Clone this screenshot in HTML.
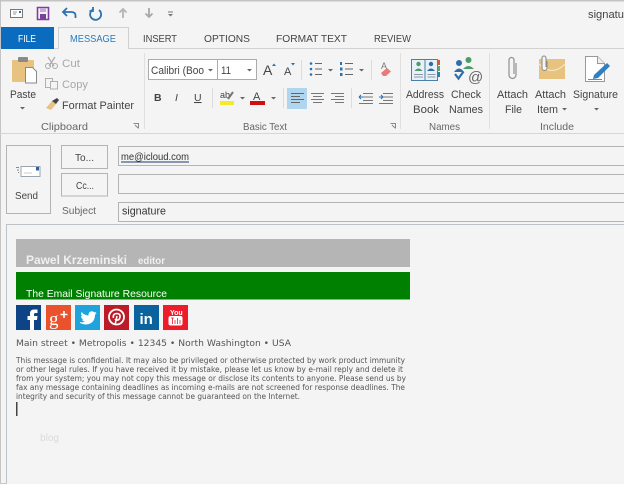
<!DOCTYPE html>
<html><head><meta charset="utf-8"><style>
html,body{margin:0;padding:0;background:#f4f4f4;width:624px;height:484px;overflow:hidden}
svg{display:block;position:absolute;left:0;top:0;filter:blur(.3px)}
text{font-family:"Liberation Sans",sans-serif;font-size:11px;fill:#444}
.g{fill:#666}
.l{fill:#a8a8a8}
.v{font-family:"DejaVu Sans",sans-serif;font-size:7.6px;fill:#555}
</style></head><body>
<svg width="624" height="484" viewBox="0 0 624 484" xmlns="http://www.w3.org/2000/svg">
<rect width="624" height="484" fill="#f4f4f4"/>
<rect x="0" y="0" width="624" height="1.5" fill="#c4c4c4"/>
<rect x="0" y="0" width="1" height="484" fill="#c4c4c4"/>
<rect x="0" y="483" width="624" height="1" fill="#c8c8c8"/>

<!-- QAT -->
<rect x="10.500" y="9.500" width="12" height="8" fill="#fff" stroke="#777"/><path d="M13 12h4M13 14h3" stroke="#999"/><rect x="19" y="11" width="2" height="2" fill="#3a6ea8"/>
<path d="M37.500 7.500h11v12h-11z" fill="none" stroke="#7b3f9e" stroke-width="1.600"/><rect x="40" y="8" width="6" height="4" fill="#c9a8dc"/><rect x="40" y="14" width="6" height="5" fill="#7b3f9e"/>
<path d="M67 8l-4 4 4 4M63 12h8q4.500 0 4.500 3.500V18" fill="none" stroke="#2a72b0" stroke-width="1.800"/>
<path d="M99 10a5.500 5.500 0 1 1-6-.5M93 7v4h-3.500" fill="none" stroke="#2a72b0" stroke-width="1.800"/>
<path d="M123 18V9M119.500 12.500L123 9l3.500 3.500" fill="none" stroke="#b4b4b4" stroke-width="1.800"/>
<path d="M149 8v9M145.500 13.500L149 17l3.500-3.500" fill="none" stroke="#a8a8a8" stroke-width="1.800"/>
<path d="M168 14h5l-2.500 2.500z" fill="#777"/><rect x="168" y="11.500" width="5" height="1" fill="#777"/>
<text x="588" y="18" textLength="36" lengthAdjust="spacingAndGlyphs">signatu</text>

<!-- Tabs -->
<rect x="0" y="48" width="624" height="1" fill="#d2d2d2"/>
<rect x="1" y="27" width="53" height="22" fill="#0b6cbf"/>
<text x="18" y="42" textLength="18" lengthAdjust="spacingAndGlyphs" style="fill:#fff;font-size:10.500px">FILE</text>
<path d="M58.500 49V27.500H128.500V49" fill="#f4f4f4" stroke="#d0d0d0"/>
<rect x="59" y="47" width="69" height="3" fill="#f4f4f4"/>
<text x="70" y="42" textLength="46" lengthAdjust="spacingAndGlyphs" style="fill:#2b7cbd;font-size:10.500px">MESSAGE</text>
<text x="143" y="42" textLength="34" lengthAdjust="spacingAndGlyphs" style="font-size:10.500px">INSERT</text>
<text x="204" y="42" textLength="46" lengthAdjust="spacingAndGlyphs" style="font-size:10.500px">OPTIONS</text>
<text x="276" y="42" textLength="71" lengthAdjust="spacingAndGlyphs" style="font-size:10.500px">FORMAT TEXT</text>
<text x="374" y="42" textLength="37" lengthAdjust="spacingAndGlyphs" style="font-size:10.500px">REVIEW</text>

<!-- Ribbon -->
<rect x="0" y="133" width="624" height="1" fill="#d6d6d6"/>
<rect x="144" y="53" width="1" height="76" fill="#e0e0e0"/>
<rect x="400" y="53" width="1" height="76" fill="#e0e0e0"/>
<rect x="489" y="53" width="1" height="76" fill="#e0e0e0"/>

<!-- Clipboard -->
<rect x="12" y="60" width="22" height="22" fill="#e8c27f" rx="1"/>
<rect x="18" y="57" width="10" height="5" fill="#8a8a8a" rx="1"/>
<path d="M25.500 67.500h7l4 4v11.500h-11z" fill="#fff" stroke="#8a8a8a"/>
<text x="10" y="98" textLength="26" lengthAdjust="spacingAndGlyphs">Paste</text>
<path d="M20 107h5l-2.500 2.500z" fill="#666"/>
<path d="M48 57l6 9M55 57l-6 9" stroke="#aaa" stroke-width="1.200"/><circle cx="48" cy="66" r="2.500" fill="none" stroke="#aaa"/><circle cx="55" cy="66" r="2.500" fill="none" stroke="#aaa"/>
<text x="62" y="67" textLength="18" lengthAdjust="spacingAndGlyphs" class="l">Cut</text>
<rect x="45.500" y="78.500" width="7" height="9" fill="#f4f4f4" stroke="#b0b0b0"/><rect x="50.500" y="81.500" width="7" height="7.500" fill="#f4f4f4" stroke="#b0b0b0"/>
<text x="62" y="88" textLength="26" lengthAdjust="spacingAndGlyphs" class="l">Copy</text>
<path d="M46 108l6-7 4 3-5 6z" fill="#e8c27f"/><path d="M52 101l5-3 2 2-3 4z" fill="#444"/>
<text x="62" y="109" textLength="72" lengthAdjust="spacingAndGlyphs">Format Painter</text>
<text x="41" y="130" textLength="47" lengthAdjust="spacingAndGlyphs" class="g" style="font-size:10.500px">Clipboard</text>
<path d="M133.500 123.500h5v5M135 125l3 3" fill="none" stroke="#888"/>

<!-- Basic text -->
<rect x="148.500" y="59.500" width="69" height="20" fill="#fff" stroke="#ababab"/>
<rect x="217.500" y="59.500" width="39" height="20" fill="#fff" stroke="#ababab"/>
<text x="151" y="74" textLength="53" lengthAdjust="spacingAndGlyphs">Calibri (Boo</text>
<path d="M208 69h5l-2.500 2.500z" fill="#666"/>
<text x="221" y="74" textLength="10" lengthAdjust="spacingAndGlyphs">11</text>
<path d="M247 69h5l-2.500 2.500z" fill="#666"/>
<text x="263" y="75" style="font-size:14px">A</text><path d="M272 66l2-2.500 2 2.500z" fill="#2a72b0"/>
<text x="284" y="75" style="font-size:11px">A</text><path d="M291 63h4l-2 2.500z" fill="#2a72b0"/>
<rect x="301" y="60" width="1" height="20" fill="#dcdcdc"/>
<g fill="#2a72b0"><circle cx="311" cy="63.500" r="1.300"/><circle cx="311" cy="69" r="1.300"/><circle cx="311" cy="74.500" r="1.300"/></g>
<path d="M315 63.500h7M315 69h7M315 74.500h7" stroke="#666"/>
<path d="M328 69h5l-2.500 2.500z" fill="#666"/>
<g fill="#2a72b0"><rect x="340" y="62" width="2" height="3"/><rect x="340" y="67.500" width="2.500" height="3"/><rect x="340" y="73" width="2.500" height="3"/></g>
<path d="M345 63.500h8M345 69h8M345 74.500h8" stroke="#666"/>
<path d="M359 69h5l-2.500 2.500z" fill="#666"/>
<rect x="371" y="60" width="1" height="20" fill="#dcdcdc"/>
<text x="381" y="69" style="font-size:9px;fill:#777">A</text>
<path d="M381 73l6-5 4 3.500-5 4.500h-3z" fill="#e87a7a"/>
<text x="154" y="101" style="font-weight:bold;font-size:10.500px">B</text>
<text x="175" y="101" style="font-style:italic;font-size:10.500px">I</text>
<text x="194" y="101" style="font-size:10.500px;text-decoration:underline">U</text>
<rect x="212" y="88" width="1" height="20" fill="#dcdcdc"/>
<rect x="220" y="101" width="14" height="4" fill="#f4ea2a"/>
<text x="220" y="98" style="font-size:9px">ab</text><path d="M228 99l5-7" stroke="#777" stroke-width="2"/>
<path d="M240 97h5l-2.500 2.500z" fill="#666"/>
<rect x="250" y="101" width="15" height="4" fill="#d01010"/>
<text x="253" y="100" style="font-size:11px">A</text>
<path d="M271 97h5l-2.500 2.500z" fill="#666"/>
<rect x="283" y="88" width="1" height="20" fill="#dcdcdc"/>
<rect x="287" y="88" width="20" height="21" fill="#b0d5ee"/>
<path d="M291 93.500h13M291 96.500h9M291 99.500h13M291 102.500h9" stroke="#666"/>
<path d="M311 93.500h13M313 96.500h9M311 99.500h13M313 102.500h9" stroke="#777"/>
<path d="M331 93.500h13M335 96.500h9M331 99.500h13M335 102.500h9" stroke="#777"/>
<rect x="351" y="88" width="1" height="20" fill="#dcdcdc"/>
<path d="M363 93.500h10M363 97h10M363 100.500h10M359 103.500h14" stroke="#777"/><path d="M359 97h4M359 97l2-2M359 97l2 2" stroke="#2a72b0" fill="none"/>
<path d="M383 93.500h10M383 97h10M383 100.500h10M379 103.500h14" stroke="#777"/><path d="M379 97h4M383 97l-2-2M383 97l-2 2" stroke="#2a72b0" fill="none"/>
<text x="243" y="130" textLength="44" lengthAdjust="spacingAndGlyphs" class="g" style="font-size:10.500px">Basic Text</text>
<path d="M390.500 123.500h5v5M392 125l3 3" fill="none" stroke="#888"/>

<!-- Names -->
<path d="M411.500 59.500h13.500v21h-13.500z" fill="#e8f1f7" stroke="#4a7fa8"/><path d="M425 59.500h12.500v21H425z" fill="#e8f1f7" stroke="#4a7fa8"/>
<rect x="437.500" y="60" width="2.500" height="5" fill="#d05a3a"/><rect x="437.500" y="66" width="2.500" height="5" fill="#5aa86a"/><rect x="437.500" y="72" width="2.500" height="5" fill="#3a7ab0"/>
<circle cx="418.500" cy="64" r="2.200" fill="#4f9a6a"/><path d="M414.500 71q4-5 8 0z" fill="#4f9a6a"/>
<circle cx="431" cy="64" r="2.200" fill="#2f6ea8"/><path d="M427 71q4-5 8 0z" fill="#2f6ea8"/>
<path d="M414 74.500h9M414 77h9M427.500 74.500h8M427.500 77h8" stroke="#8a9aa8"/>
<circle cx="468.500" cy="60" r="3" fill="#4f9a6a"/><path d="M463 69q5.500-6 11 0z" fill="#4f9a6a"/>
<circle cx="459" cy="63" r="3" fill="#2f6ea8"/><path d="M454 72q5-7 10 0z" fill="#2f6ea8"/>
<path d="M455 74l3.500 4.500 5-7" fill="none" stroke="#2f6ea8" stroke-width="2.200"/>
<text x="468" y="82" style="font-size:15px;fill:#666">@</text>
<text x="406" y="98" textLength="38" lengthAdjust="spacingAndGlyphs">Address</text>
<text x="413" y="113" textLength="26" lengthAdjust="spacingAndGlyphs">Book</text>
<text x="451" y="98" textLength="30" lengthAdjust="spacingAndGlyphs">Check</text>
<text x="449" y="113" textLength="34" lengthAdjust="spacingAndGlyphs">Names</text>
<text x="429" y="130" textLength="31" lengthAdjust="spacingAndGlyphs" class="g" style="font-size:10.500px">Names</text>

<!-- Include -->
<path d="M516 63v12a3.500 3.500 0 0 1-7 0V60a2.500 2.500 0 0 1 5 0v14" fill="none" stroke="#909090" stroke-width="1.200"/>
<text x="497" y="98" textLength="31" lengthAdjust="spacingAndGlyphs">Attach</text>
<text x="505" y="113" textLength="17" lengthAdjust="spacingAndGlyphs">File</text>
<rect x="539" y="59" width="26" height="20" fill="#e8c27f"/>
<path d="M539 64q13 13 26 0" fill="none" stroke="#f6e6c6" stroke-width="1.200"/>
<path d="M547 61v7a2.500 2.500 0 0 1-5 0v-10a2 2 0 0 1 4 0v9" fill="#f4f4f4" stroke="#888"/>
<text x="535" y="98" textLength="31" lengthAdjust="spacingAndGlyphs">Attach</text>
<text x="537" y="113" textLength="21" lengthAdjust="spacingAndGlyphs">Item</text>
<path d="M562 108h5l-2.500 2.500z" fill="#666"/>
<path d="M585.500 56.500h12l7 7v18h-19z" fill="#fff" stroke="#999"/><path d="M597.500 56.500v7h7" fill="#eee" stroke="#999"/>
<path d="M594 75l13-12 3 3-12 12-5 1z" fill="#2f7fc4"/>
<path d="M588 79.500h14" stroke="#5a90b8"/>
<text x="573" y="98" textLength="45" lengthAdjust="spacingAndGlyphs">Signature</text>
<path d="M594 108h5l-2.500 2.500z" fill="#666"/>
<text x="540" y="130" textLength="34" lengthAdjust="spacingAndGlyphs" class="g" style="font-size:10.500px">Include</text>

<!-- Compose -->
<rect x="6.500" y="145.500" width="44" height="68" fill="#f4f4f4" stroke="#b4b4b4"/>
<rect x="21" y="166.500" width="19" height="10" fill="#fff" stroke="#9aa4ac"/><rect x="36" y="167" width="3" height="3.500" fill="#2a62a8"/><path d="M24 173h8" stroke="#ccc"/>
<path d="M16 167.500h3M17 170h2M18 172.500h1" stroke="#888"/>
<text x="15" y="199" textLength="23" lengthAdjust="spacingAndGlyphs" style="font-size:10.500px">Send</text>
<rect x="61.500" y="145.500" width="46" height="23" fill="#f4f4f4" stroke="#b4b4b4"/>
<text x="75" y="161" textLength="19" lengthAdjust="spacingAndGlyphs" style="font-size:10.500px">To...</text>
<rect x="61.500" y="173.500" width="46" height="22.500" fill="#f4f4f4" stroke="#b4b4b4"/>
<text x="76" y="189" textLength="18" lengthAdjust="spacingAndGlyphs" style="font-size:10.500px">Cc...</text>
<text x="62" y="214" textLength="34" lengthAdjust="spacingAndGlyphs" class="g" style="font-size:10.500px">Subject</text>
<rect x="118.500" y="146.500" width="510" height="19" fill="#f4f4f4" stroke="#b4b4b4"/>
<rect x="118.500" y="174.500" width="510" height="19" fill="#f4f4f4" stroke="#b4b4b4"/>
<rect x="118.500" y="202.500" width="510" height="19" fill="#f4f4f4" stroke="#b4b4b4"/>
<text x="121" y="160" textLength="68" lengthAdjust="spacingAndGlyphs" style="font-size:10.500px;fill:#333">me@icloud.com</text>
<rect x="121" y="161.500" width="68" height="1" fill="#1a3a6a"/>
<text x="122" y="214.500" textLength="44" lengthAdjust="spacingAndGlyphs" style="font-size:11px;fill:#333">signature</text>

<!-- Body -->
<rect x="6.500" y="224.500" width="630" height="270" fill="#f4f4f4" stroke="#bcc2c8"/>
<rect x="16" y="239" width="394" height="28" fill="#b5b5b5"/>
<text x="26" y="264" textLength="101" lengthAdjust="spacingAndGlyphs" style="font-weight:bold;font-size:12px;fill:#f0f0f0">Pawel Krzeminski</text>
<text x="138" y="264" textLength="27" lengthAdjust="spacingAndGlyphs" style="font-weight:bold;font-size:10px;fill:#f0f0f0">editor</text>
<rect x="16" y="272" width="394" height="27.500" fill="#008000"/>
<text x="26" y="297" textLength="141" lengthAdjust="spacingAndGlyphs" style="font-size:10.500px;fill:#fff">The Email Signature Resource</text>

<!-- Social -->
<rect x="16" y="305" width="25" height="25" fill="#0c4485"/>
<path d="M30 330v-10h-2.500v-4H30v-2.500q0-4 4-4h3.500v3.500h-2q-1.500 0-1.500 1.500V316h3.500l-.5 4h-3v10z" fill="#fff"/>
<rect x="46" y="305" width="25" height="25" fill="#e9522c"/>
<text x="49" y="325" style="font-family:'Liberation Serif',serif;font-size:19px;fill:#fff">g</text>
<path d="M60.500 314.500h7M64 311v7" stroke="#fff" stroke-width="1.600"/>
<rect x="75" y="305" width="25" height="25" fill="#1ea3dc"/>
<path d="M80 322q3 1 5-.5-2.500 0-3-2 1 .2 1.500 0-2.500-1-2.500-3.500.8.4 1.500.4-2.300-2-1-4.400 3 3.300 7 3.500-.3-3.800 3-4.300 1.800 0 2.800 1.200 1.200-.2 2-.8-.4 1.300-1.500 2 1 0 2-.5-.8 1.100-1.800 1.800 0 6-4.500 8.500-5 2.500-10.500-.4z" fill="#fff"/>
<rect x="104" y="305" width="25" height="25" fill="#bb1c27"/>
<circle cx="116.500" cy="317" r="7.500" fill="none" stroke="#fff" stroke-width="1.800"/>
<path d="M115 325l2-9M113.500 318q-1-4 3-4.500 4 0 3.500 3.500-.5 3.500-3.500 3-1 0-1.300-1" fill="none" stroke="#fff" stroke-width="1.600"/>
<rect x="134" y="305" width="25" height="25" fill="#0b639d"/>
<text x="139.500" y="324" style="font-weight:bold;font-size:15px;fill:#fff">in</text>
<rect x="163" y="305" width="25" height="25" fill="#ec1c2b"/>
<text x="170" y="315" style="font-weight:bold;font-size:7px;fill:#fff">You</text>
<rect x="168.500" y="316" width="14" height="9.500" rx="2" fill="#fff"/>
<path d="M171 318h3M172.500 318v6M175 320v4M177.500 318v6M180 320v4" stroke="#ec1c2b" stroke-width=".8"/>

<text x="16" y="346" textLength="275" lengthAdjust="spacingAndGlyphs" style="font-family:'DejaVu Sans',sans-serif;font-size:9px;fill:#555">Main street • Metropolis • 12345 • North Washington • USA</text>

<text class="v" x="16" y="363" textLength="389" lengthAdjust="spacingAndGlyphs">This message is confidential. It may also be privileged or otherwise protected by work product immunity</text>
<text class="v" x="16" y="372" textLength="387" lengthAdjust="spacingAndGlyphs">or other legal rules. If you have received it by mistake, please let us know by e-mail reply and delete it</text>
<text class="v" x="16" y="381" textLength="390" lengthAdjust="spacingAndGlyphs">from your system; you may not copy this message or disclose its contents to anyone. Please send us by</text>
<text class="v" x="16" y="390" textLength="389" lengthAdjust="spacingAndGlyphs">fax any message containing deadlines as incoming e-mails are not screened for response deadlines. The</text>
<text class="v" x="16" y="399" textLength="284" lengthAdjust="spacingAndGlyphs">integrity and security of this message cannot be guaranteed on the Internet.</text>
<rect x="16" y="402" width="1.500" height="14" fill="#444"/>
<text x="40" y="441" textLength="19" lengthAdjust="spacingAndGlyphs" style="font-size:10.500px;fill:#dadada">blog</text>
</svg>
</body></html>
